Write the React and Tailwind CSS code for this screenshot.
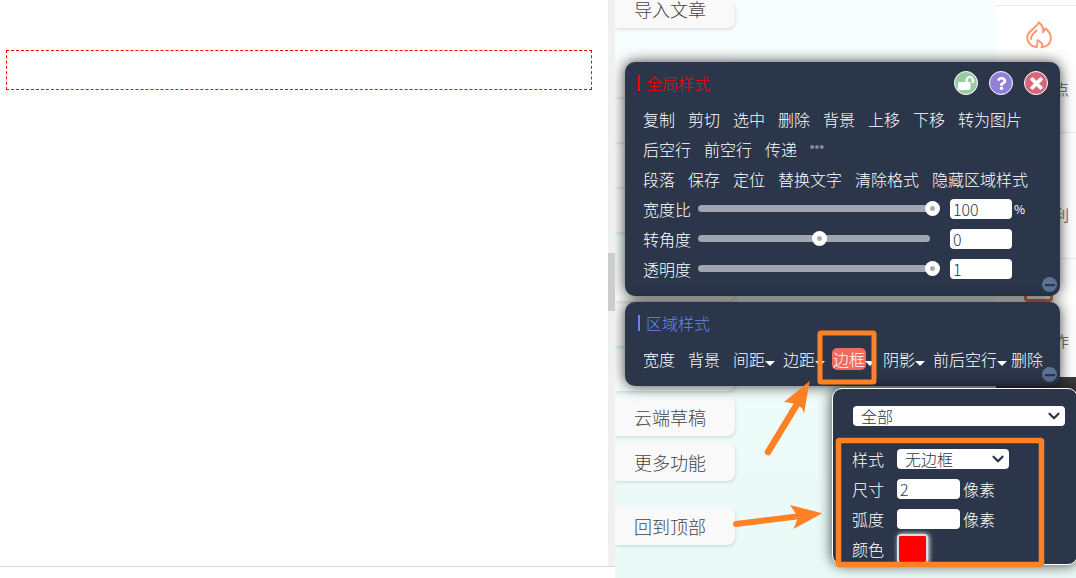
import { useState } from "react";
import { FaEllipsisH, FaLockOpen, FaMinus, FaQuestion, FaTimes } from "react-icons/fa";
import { ChevronDown } from "lucide-react";

const globalRows = [
  ["复制", "剪切", "选中", "删除", "背景", "上移", "下移", "转为图片"],
  ["后空行", "前空行", "传递", "more"],
  ["段落", "保存", "定位", "替换文字", "清除格式", "隐藏区域样式"],
];

const areaItems = [
  { label: "宽度", gap: "mr-[13px]" },
  { label: "背景", gap: "mr-[13px]" },
  { label: "间距", gap: "mr-2", caret: true },
  { label: "边距", gap: "mr-2", caret: true },
  { label: "边框", gap: "mr-2", caret: true, active: true },
  { label: "阴影", gap: "mr-2", caret: true },
  { label: "前后空行", gap: "mr-1", caret: true },
  { label: "删除", gap: "" },
];

// groups of the side menu, null is a slot that sits under the panels
const sideGroups = [
  { items: ["导入文章"], gap: "", height: "h-7 pb-2.5" },
  { items: [null, null, null, null], gap: "mt-[30px]", height: "h-[39px]" },
  { items: [null, null, null, "云端草稿", "更多功能"], gap: "mt-[30px]", height: "h-[39px]" },
  { items: ["回到顶部"], gap: "mt-[25px]", height: "h-[39px]" },
];

const field =
  "h-5 rounded bg-white px-[3px] text-base leading-5 text-[#2b364a] outline-none";

function SideMenu() {
  return (
    <nav className="w-[120px]">
      {sideGroups.map(({ items, gap, height }, i) => (
        <div key={i} className={`flex flex-col gap-1.5 ${gap}`}>
          {items.map((label, j) =>
            label ? (
              <button
                key={j}
                className={`rounded-r-lg bg-[#f9f9f9] pl-[19px] text-left text-lg leading-none text-[#444] shadow-[1px_2px_3px_rgba(0,0,0,0.1)] ${height}`}
              >
                {label}
              </button>
            ) : (
              <div
                key={j}
                className={`rounded-r-lg bg-[#f9f9f9] shadow-[1px_2px_3px_rgba(0,0,0,0.1)] ${height}`}
              />
            )
          )}
        </div>
      ))}
    </nav>
  );
}

function FlameIcon() {
  return (
    <svg
      viewBox="0 0 26 28"
      className="h-7 w-[26px]"
      fill="none"
      stroke="#ff9873"
      strokeWidth="2"
      strokeLinejoin="round"
      strokeLinecap="round"
    >
      <path d="M10.8 26.3C5 25.5 1.2 21.5 1.2 16.3C1.2 9.5 9.5 8.5 12.8 1.4C16.5 4.2 17.7 7.2 17.2 11.3C18.4 10.4 19 9 19.3 7.4C23 10.2 25 13.5 24.9 17.2C24.8 22 21.5 25.5 15.5 26.3C17.5 24 16 21.5 11.5 19.2C12 22 10.4 23.3 10.8 26.3Z" />
      <path d="M5 18C4.6 13.5 8 12.5 10.5 9.5" />
    </svg>
  );
}

function RightRail() {
  return (
    <aside className="h-[377px] w-20 bg-white pt-[5px] text-[15px] font-normal text-[#777]">
      <div className="flex h-[127px] flex-col items-end justify-between border-t border-[#e6eaec] pt-[15px] pr-[7px] pb-8">
        <div className="pr-[17px]">
          <FlameIcon />
        </div>
        <span>点</span>
      </div>
      <div className="flex h-[126px] items-end justify-end border-t border-[#e6eaec] pr-[7px] pb-8">
        利
      </div>
      <div className="flex h-[126px] flex-col items-end justify-between border-t border-[#e6eaec] pt-[15px] pr-[7px] pb-8">
        <div className="mr-4 h-7 w-[29px] rounded-sm border-3 border-[#e8734d]" />
        <span>作</span>
      </div>
    </aside>
  );
}

function Panel({ title, accent, bar, actions, children }) {
  return (
    <section className="relative rounded-[10px] bg-[#2b364a] pt-1.5 pb-3 text-base font-light text-white shadow-[0_0_14px_rgba(0,0,0,0.75)]">
      <header className="mb-1.5 flex h-[30px] items-center gap-1.5 pr-3 pl-[13px]">
        <span className={`h-4 w-0.5 ${bar}`} />
        <h2 className={`flex-1 ${accent}`}>{title}</h2>
        {actions}
      </header>
      {children}
      <button
        aria-label="收起"
        className="absolute right-[3px] bottom-1 flex size-[15px] items-center justify-center rounded-full bg-[#5b7196] text-[#2b364a]"
      >
        <FaMinus size={12} />
      </button>
    </section>
  );
}

function RoundButton({ label, color, children }) {
  return (
    <button
      aria-label={label}
      className={`ml-[5px] flex size-6 items-center justify-center rounded-full border-[1.5px] border-white text-white ${color}`}
    >
      {children}
    </button>
  );
}

function SliderRow({ id, label, min = 0, max, step, initial, unit }) {
  const [value, setValue] = useState(initial);
  return (
    <div className="flex h-[30px] items-center pl-[18px]">
      <label htmlFor={id} className="w-[55px]">
        {label}
      </label>
      <div className="grid h-[22px] w-[242px] items-center pb-0.5">
        <div className="h-[7px] w-[232px] rounded-full bg-[#9fa6b2] [grid-area:1/1]" />
        <input
          id={id}
          type="range"
          min={min}
          max={max}
          step={step}
          value={value}
          onChange={(e) => setValue(e.target.value)}
          className="w-full appearance-none bg-transparent [grid-area:1/1] [&::-webkit-slider-thumb]:size-[15px] [&::-webkit-slider-thumb]:appearance-none [&::-webkit-slider-thumb]:rounded-full [&::-webkit-slider-thumb]:bg-[radial-gradient(circle,#a8adb0_2px,#fff_3px)]"
        />
      </div>
      <input
        aria-label={`${label}数值`}
        value={value}
        onChange={(e) => setValue(e.target.value)}
        className={`ml-2.5 w-[62px] ${field}`}
      />
      {unit && <span className="ml-0.5 text-xs font-normal">{unit}</span>}
    </div>
  );
}

function Select({ width, options, ...props }) {
  return (
    <div className={`grid items-center ${width}`}>
      <select
        {...props}
        className="h-5 w-full appearance-none rounded bg-white pl-2 leading-5 text-[#2b364a] outline-none [grid-area:1/1]"
      >
        {options.map((o) => (
          <option key={o}>{o}</option>
        ))}
      </select>
      <ChevronDown
        size={18}
        strokeWidth={3}
        className="pointer-events-none mr-0.5 justify-self-end text-[#2b364a] [grid-area:1/1]"
      />
    </div>
  );
}

function MenuRow({ id, label, children }) {
  return (
    <div className="flex h-[30px] items-center pl-[19px]">
      <label htmlFor={id} className="w-[45px]">
        {label}
      </label>
      {children}
    </div>
  );
}

function BorderMenu() {
  return (
    <div className="absolute top-full -right-[18px] mt-0.5 w-[246px] rounded-[10px] border border-white bg-[#2b364a] pt-3 text-base font-light text-white shadow-[0_0_14px_rgba(0,0,0,0.75)]">
      <div className="mb-[13px] flex h-[30px] items-center pl-5">
        <Select aria-label="边框位置" width="w-[212px]" options={["全部"]} />
      </div>
      <MenuRow id="line" label="样式">
        <Select id="line" width="w-28" options={["无边框"]} />
      </MenuRow>
      <MenuRow id="size" label="尺寸">
        <input id="size" defaultValue="2" className={`mr-[3px] w-[63px] ${field}`} />
        像素
      </MenuRow>
      <MenuRow id="radius" label="弧度">
        <input id="radius" className={`mr-[3px] w-[63px] ${field}`} />
        像素
      </MenuRow>
      <MenuRow id="color" label="颜色">
        <input
          id="color"
          type="color"
          defaultValue="#ff0000"
          className="h-[30px] w-[31px] appearance-none rounded-sm border-2 border-[#d9dde0] bg-[#f00] shadow-[1px_0_5px_#fff] [&::-webkit-color-swatch]:border-0 [&::-webkit-color-swatch-wrapper]:p-0"
        />
      </MenuRow>
    </div>
  );
}

function Annotations() {
  return (
    <svg
      viewBox="615 0 461 578"
      className="pointer-events-none absolute top-0 right-0 h-[578px] w-[461px]"
      fill="none"
      stroke="#ff8126"
    >
      <rect x="820" y="333" width="54" height="49" rx="1" strokeWidth="5" />
      <rect x="838.5" y="440.5" width="203" height="124" rx="1" strokeWidth="5.5" />
      <path d="M768 452L799 401" strokeWidth="6.5" strokeLinecap="round" />
      <path d="M809.7 381L784 402L794.5 403.5L802 408L804 413.7Z" fill="#ff8126" stroke="none" />
      <path d="M736 524L797 516.5" strokeWidth="6" strokeLinecap="round" />
      <path d="M822.3 513.3L790 505L796 514L797.5 519L793.5 529Z" fill="#ff8126" stroke="none" />
    </svg>
  );
}

export default function App() {
  return (
    <div className="flex min-h-screen bg-white font-['Noto_Sans_CJK_SC',sans-serif] font-light">
      <main className="flex min-w-0 flex-1 flex-col pb-[11px]">
        <div className="flex flex-1 border-b border-[#d8d8d8]">
          <div className="flex-1 pt-[50px] pr-4 pl-1.5">
            <div className="h-10 border border-dashed border-[#f00]" />
          </div>
          <div className="w-[7px] bg-[#f0f0f0] pt-[253px]">
            <div className="h-[58px] bg-[#cdcdcd]" />
          </div>
        </div>
      </main>

      <div className="relative w-[461px] shrink-0 overflow-hidden bg-linear-to-b from-[#f8fefe] to-[#e9faf7]">
        <div className="flex items-start justify-between">
          <SideMenu />
          <div>
            <RightRail />
            <div className="h-4 bg-[#3c3c3c]" />
          </div>
        </div>

        {/* floating style panels */}
        <div className="absolute top-[62px] right-4 flex w-[435px] flex-col gap-1.5">
          <Panel
            title="全局样式"
            accent="text-[#f00]"
            bar="bg-[#f00]"
            actions={
              <>
                <RoundButton label="解锁" color="bg-[#97cca4]">
                  <FaLockOpen size={16} />
                </RoundButton>
                <RoundButton label="帮助" color="bg-[#8f80dc]">
                  <FaQuestion size={13} />
                </RoundButton>
                <RoundButton label="关闭" color="bg-[#d8677a]">
                  <FaTimes size={17} stroke="currentColor" strokeWidth={30} />
                </RoundButton>
              </>
            }
          >
            {globalRows.map((row, i) => (
              <div key={i} className="flex h-[30px] items-center gap-[13px] pl-[18px]">
                {row.map((item) =>
                  item === "more" ? (
                    <button key={item} aria-label="更多" className="mb-1 text-[#858c99]">
                      <FaEllipsisH size={14} />
                    </button>
                  ) : (
                    <button key={item}>{item}</button>
                  )
                )}
              </div>
            ))}
            <SliderRow id="width" label="宽度比" max={100} step={1} initial={100} unit="%" />
            <SliderRow id="corner" label="转角度" min={-180} max={180} step={1} initial={0} />
            <SliderRow id="opacity" label="透明度" max={1} step={0.1} initial={1} />
          </Panel>

          <div className="relative">
            <Panel title="区域样式" accent="text-[#6485ee]" bar="bg-[#6485ee]">
              <div className="flex h-[30px] items-center pl-[18px]">
                {areaItems.map(({ label, gap, caret, active }) => (
                  <button key={label} className={`flex items-center leading-5 ${gap}`}>
                    <span
                      className={
                        active ? "rounded-sm bg-[#f2695f] shadow-[0_0_0_1px_#f2695f]" : undefined
                      }
                    >
                      {label}
                    </span>
                    {caret && (
                      <span className="mt-2 size-0 border-x-[5px] border-t-[5px] border-x-transparent border-t-white" />
                    )}
                  </button>
                ))}
              </div>
            </Panel>
            <BorderMenu />
          </div>
        </div>

        <Annotations />
      </div>
    </div>
  );
}
